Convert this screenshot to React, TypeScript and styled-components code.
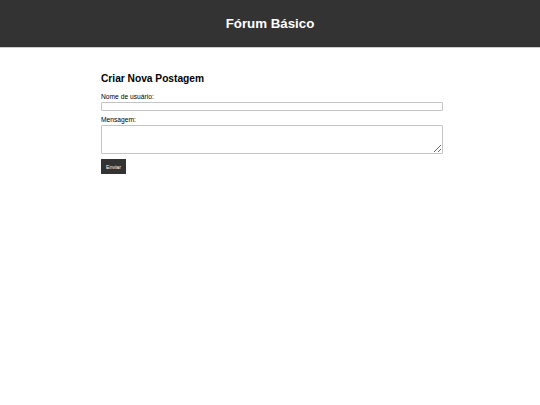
import React from "react";
import styled, { createGlobalStyle } from "styled-components";

const GlobalStyle = createGlobalStyle`
  body {
    margin: 0;
    background: #fff;
    font-family: "Liberation Sans", Arial, sans-serif;
    color: #000;
  }
`;

const Header = styled.header`
  background: #333;
  height: 47px;
  border-bottom: 1px solid #ccc;
  display: flex;
  align-items: center;
  justify-content: center;
`;

const Title = styled.h1`
  margin: 0;
  color: #fff;
  font-size: 13.3px;
  font-weight: bold;
`;

const Main = styled.main`
  width: 342px;
  margin-left: 101px;
  padding-top: 24px;
`;

const FormTitle = styled.h2`
  margin: 0 0 8px;
  font-size: 10.2px;
  line-height: 13px;
  font-weight: bold;
`;

const Form = styled.form`
  display: flex;
  flex-direction: column;
  align-items: flex-start;
`;

const Label = styled.label`
  font-size: 6.7px;
  line-height: 8px;
  margin-bottom: 1px;
  color: #000;
`;

const Input = styled.input`
  box-sizing: border-box;
  width: 100%;
  height: 9px;
  margin: 0 0 5px;
  padding: 0;
  border: 1px solid #c4c4c4;
  border-radius: 1px;
  font-size: 6.7px;
`;

const TextArea = styled.textarea`
  box-sizing: border-box;
  width: 100%;
  height: 29px;
  margin: 0 0 5px;
  padding: 0;
  border: 1px solid #c4c4c4;
  border-radius: 1px;
  font-size: 6.7px;
  font-family: inherit;
`;

const Button = styled.button`
  background: #333;
  color: #fff;
  border: none;
  height: 15px;
  padding: 0 5px;
  font-size: 5.3px;
  font-family: inherit;
`;

export default function App() {
  return (
    <>
      <GlobalStyle />
      <Header>
        <Title>Fórum Básico</Title>
      </Header>
      <Main>
        <FormTitle>Criar Nova Postagem</FormTitle>
        <Form onSubmit={e => e.preventDefault()}>
          <Label htmlFor="user">Nome de usuário:</Label>
          <Input id="user" type="text" />
          <Label htmlFor="msg">Mensagem:</Label>
          <TextArea id="msg" />
          <Button type="submit">Enviar</Button>
        </Form>
      </Main>
    </>
  );
}
